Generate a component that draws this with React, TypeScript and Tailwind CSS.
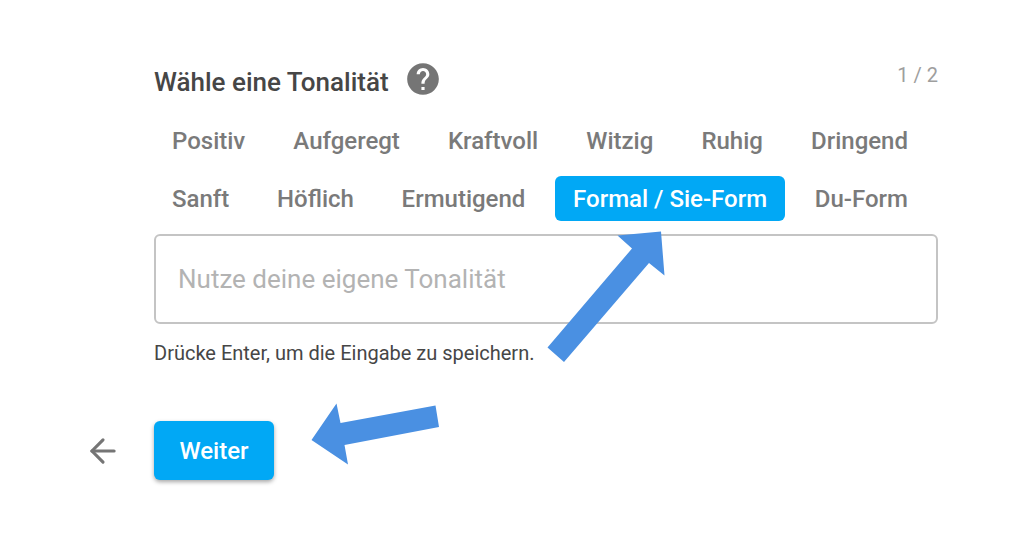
import { useState } from "react";
import { ArrowLeft } from "lucide-react";
import { MdHelp } from "react-icons/md";
import clsx from "clsx";

const toneRows = [
  ["Positiv", "Aufgeregt", "Kraftvoll", "Witzig", "Ruhig", "Dringend"],
  ["Sanft", "Höflich", "Ermutigend", "Formal / Sie-Form", "Du-Form"],
];

interface ToneButtonProps {
  label: string;
  selected: boolean;
  onSelect: () => void;
}

function ToneButton({ label, selected, onSelect }: ToneButtonProps) {
  return (
    <button
      type="button"
      aria-pressed={selected}
      onClick={onSelect}
      className={clsx(
        "h-[45px] whitespace-nowrap rounded-md px-[18px] text-[24px] leading-7 font-medium",
        selected ? "bg-[#01a8f5] text-white" : "text-[#7a7a7a]"
      )}
    >
      {label}
    </button>
  );
}

export default function App() {
  const [tone, setTone] = useState("Formal / Sie-Form");
  const [customTone, setCustomTone] = useState("");

  return (
    <main className="bg-white pt-[60px] pr-[86px] pb-20 pl-[84px] font-['Roboto',sans-serif] text-[#464646]">
      <div className="pl-[70px]">
        <header className="flex items-start justify-between">
          <div className="flex items-start gap-[15px]">
            <h1 className="pt-1 text-[26px] leading-9 font-medium">
              Wähle eine Tonalität
            </h1>
            <button type="button" aria-label="Hilfe" className="text-[#757575]">
              <MdHelp size={38} />
            </button>
          </div>
          <span className="text-[20px] leading-[30px] text-[#9e9e9e]">1 / 2</span>
        </header>

        <div className="mt-[18px] mr-3 flex flex-col gap-[13px]">
          {toneRows.map((row) => (
            <div key={row[0]} className="flex justify-between">
              {row.map((label) => (
                <ToneButton
                  key={label}
                  label={label}
                  selected={tone === label}
                  onSelect={() => setTone(label)}
                />
              ))}
            </div>
          ))}
        </div>

        <div className="relative mt-[13px]">
          <input
            type="text"
            aria-label="Eigene Tonalität"
            aria-describedby="tone-hint"
            placeholder="Nutze deine eigene Tonalität"
            value={customTone}
            onChange={(e) => setCustomTone(e.target.value)}
            className="block h-[90px] w-full rounded-md border-2 border-[#c4c4c4] px-[22px] text-[26px] placeholder:text-[#b3b3b3]"
          />
          <p id="tone-hint" className="mt-[14px] text-[20px] leading-[30px]">
            Drücke Enter, um die Eingabe zu speichern.
          </p>
          {/* arrow pointing at the selected tone */}
          <svg
            aria-hidden="true"
            viewBox="0 0 120 134"
            className="pointer-events-none absolute -top-[4px] left-[392px] h-[134px] w-[120px]"
          >
            <path
              d="M115 1.5 L71.5 5.5 L86 18.5 L1.5 117.5 L18 132 L103 33 L118.5 45.5 Z"
              fill="#4a90e2"
            />
          </svg>
        </div>
      </div>

      <div className="mt-[53px] flex items-center">
        <button type="button" aria-label="Zurück" className="w-[70px] text-[#757575]">
          <ArrowLeft size={38} />
        </button>
        <button
          type="button"
          className="h-[59px] w-[120px] rounded-md bg-[#01a8f5] text-[24px] font-medium text-white shadow-[0_2px_4px_rgba(0,0,0,0.35)]"
        >
          Weiter
        </button>
        <svg
          aria-hidden="true"
          viewBox="0 0 130 64"
          className="-mt-8 ml-9 h-16 w-[130px]"
        >
          <path
            d="M1.5 37 L26.5 0.5 L30.5 20 L125.5 2.5 L129 24 L34.5 42 L38 61.5 Z"
            fill="#4a90e2"
          />
        </svg>
      </div>
    </main>
  );
}
